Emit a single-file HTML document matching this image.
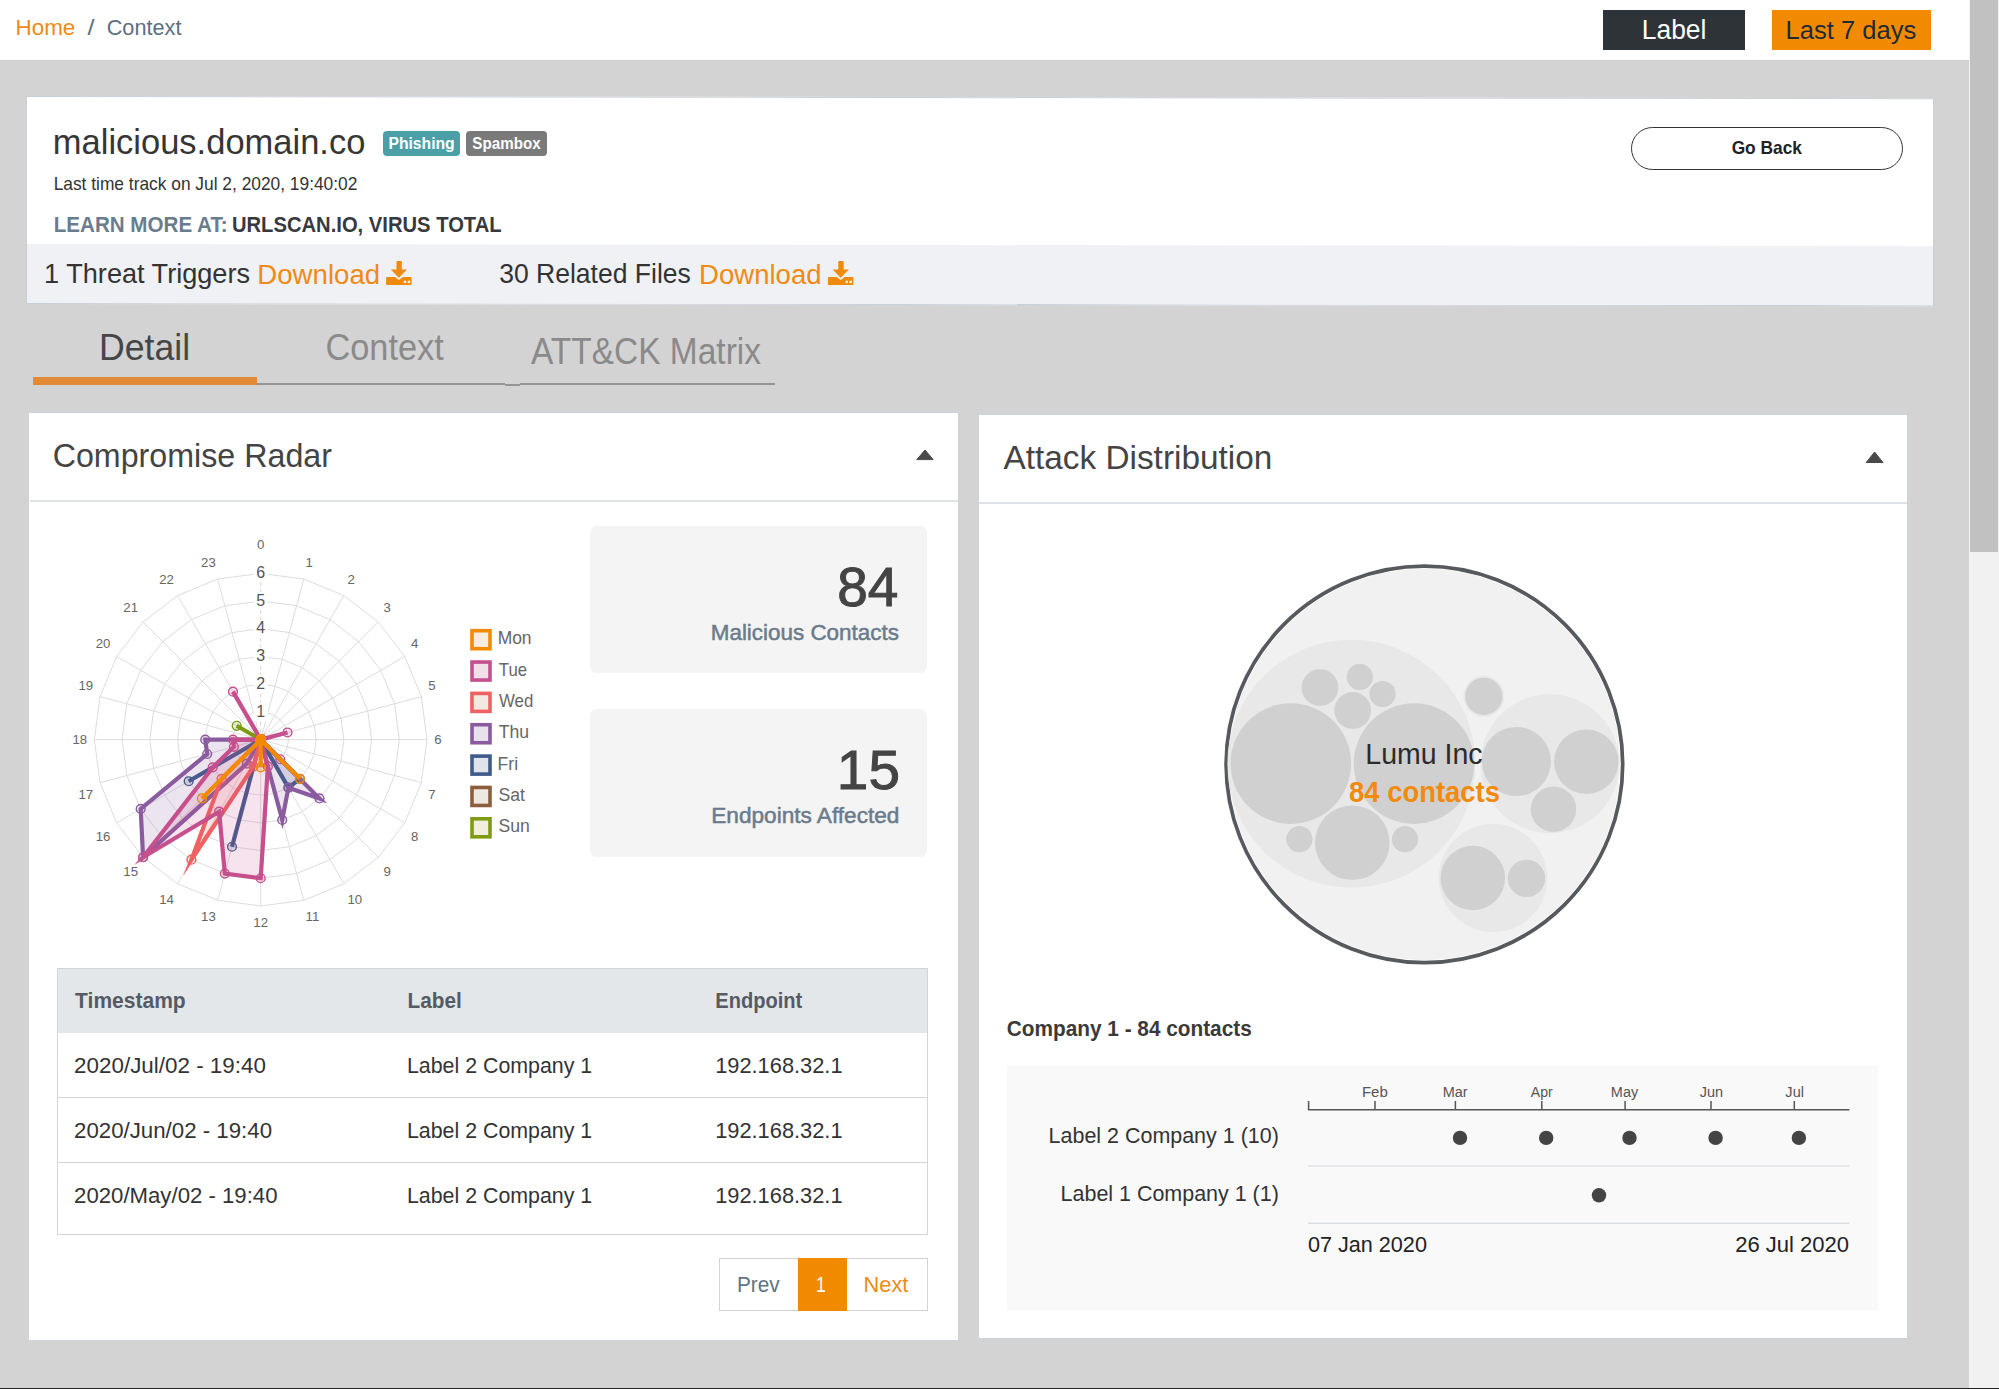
<!DOCTYPE html>
<html><head><meta charset="utf-8"><title>Context</title>
<style>
html,body{margin:0;padding:0}
body{width:1999px;height:1389px;overflow:hidden;background:#d3d3d3;position:relative;font-family:"Liberation Sans",sans-serif}
.a{position:absolute;box-sizing:border-box}
svg text{font-family:"Liberation Sans",sans-serif}
</style></head><body>
<div class="a" style="left:0;top:0;width:1969px;height:60px;background:#fff"></div>
<div class="a" style="left:0;top:60px;width:1969px;height:1px;background:#cbcdd0"></div>
<div class="a" style="left:1969px;top:0;width:30px;height:1389px;background:#f1f1f1"></div>
<div class="a" style="left:1970px;top:0;width:28px;height:552px;background:#c1c1c1"></div>
<div class="a" style="left:1603px;top:10px;width:142px;height:40px;background:#2e3338"></div>
<div class="a" style="left:1772px;top:10px;width:159px;height:40px;background:#f28a00"></div>

<div class="a" style="left:25.5px;top:95.5px;width:1907.5px;height:207.5px;background:#fff;border:1px solid #c9cfd7;transform:skewY(0.065deg);transform-origin:0 0"><div class="a" style="left:0;top:147.2px;width:1905.5px;height:59.3px;background:#eff1f4"></div></div>
<div class="a" style="left:383px;top:131px;width:77px;height:25px;background:#4aa0a6;border-radius:4px"></div>
<div class="a" style="left:465.6px;top:131px;width:81.6px;height:25px;background:#7a7a7a;border-radius:4px"></div>
<div class="a" style="left:1631px;top:127px;width:272px;height:42.5px;border:1.5px solid #333;border-radius:22px;background:#fff"></div>

<div class="a" style="left:33px;top:377px;width:224px;height:7.5px;background:#e08a35"></div>
<div class="a" style="left:257px;top:383px;width:518px;height:2px;background:#959595"></div>
<div class="a" style="left:505px;top:383px;width:15px;height:1px;background:#d3d3d3"></div>
<div class="a" style="left:505px;top:384px;width:15px;height:2px;background:#959595"></div>

<div class="a" style="left:28px;top:412px;width:930.5px;height:928.8px;background:#fff;border:1px solid #cdd3da"></div>
<div class="a" style="left:29.5px;top:500px;width:928px;height:1.5px;background:#dfe2e6"></div>
<div class="a" style="left:977.5px;top:413.5px;width:930px;height:925.6px;background:#fff;border:1px solid #cdd3da"></div>
<div class="a" style="left:978.5px;top:502px;width:928px;height:1.5px;background:#dfe2e6"></div>

<div class="a" style="left:590px;top:526px;width:337px;height:147px;background:#f4f4f4;border-radius:7px"></div>
<div class="a" style="left:590px;top:708.5px;width:337px;height:148px;background:#f4f4f4;border-radius:7px"></div>

<div class="a" style="left:56.5px;top:968px;width:871px;height:267px;background:#fff;border:1px solid #d2d6db"></div>
<div class="a" style="left:57.5px;top:969px;width:869px;height:63.5px;background:#e4e7ea"></div>
<div class="a" style="left:57.5px;top:1097px;width:869px;height:1px;background:#d2d6db"></div>
<div class="a" style="left:57.5px;top:1162.3px;width:869px;height:1px;background:#d2d6db"></div>

<div class="a" style="left:719px;top:1258px;width:208.5px;height:53px;background:#fff;border:1px solid #cfd4da"></div>
<div class="a" style="left:797.7px;top:1258px;width:49.2px;height:53px;background:#f28a00"></div>

<div class="a" style="left:1006.8px;top:1066.3px;width:871.4px;height:244px;background:#f9f9f9"></div>
<div class="a" style="left:0;top:1388px;width:1999px;height:1px;background:#222"></div>

<svg class="a" style="left:0;top:0" width="1999" height="1389" viewBox="0 0 1999 1389">
<g id="radar">
<polygon points="260.70,711.93 267.87,712.87 274.56,715.64 280.30,720.05 284.71,725.79 287.48,732.48 288.42,739.65 287.48,746.82 284.71,753.51 280.30,759.25 274.56,763.66 267.87,766.43 260.70,767.37 253.53,766.43 246.84,763.66 241.10,759.25 236.69,753.51 233.92,746.82 232.98,739.65 233.92,732.48 236.69,725.79 241.10,720.05 246.84,715.64 253.53,712.87" fill="none" stroke="#dddddd" stroke-width="1"/>
<polygon points="260.70,684.21 275.05,686.10 288.42,691.64 299.90,700.45 308.71,711.93 314.25,725.30 316.14,739.65 314.25,754.00 308.71,767.37 299.90,778.85 288.42,787.66 275.05,793.20 260.70,795.09 246.35,793.20 232.98,787.66 221.50,778.85 212.69,767.37 207.15,754.00 205.26,739.65 207.15,725.30 212.69,711.93 221.50,700.45 232.98,691.64 246.35,686.10" fill="none" stroke="#dddddd" stroke-width="1"/>
<polygon points="260.70,656.49 282.22,659.32 302.28,667.63 319.50,680.85 332.72,698.07 341.03,718.13 343.86,739.65 341.03,761.17 332.72,781.23 319.50,798.45 302.28,811.67 282.22,819.98 260.70,822.81 239.18,819.98 219.12,811.67 201.90,798.45 188.68,781.23 180.37,761.17 177.54,739.65 180.37,718.13 188.68,698.07 201.90,680.85 219.12,667.63 239.18,659.32" fill="none" stroke="#dddddd" stroke-width="1"/>
<polygon points="260.70,628.77 289.40,632.55 316.14,643.63 339.10,661.25 356.72,684.21 367.80,710.95 371.58,739.65 367.80,768.35 356.72,795.09 339.10,818.05 316.14,835.67 289.40,846.75 260.70,850.53 232.00,846.75 205.26,835.67 182.30,818.05 164.68,795.09 153.60,768.35 149.82,739.65 153.60,710.95 164.68,684.21 182.30,661.25 205.26,643.63 232.00,632.55" fill="none" stroke="#dddddd" stroke-width="1"/>
<polygon points="260.70,601.05 296.57,605.77 330.00,619.62 358.70,641.65 380.73,670.35 394.58,703.78 399.30,739.65 394.58,775.52 380.73,808.95 358.70,837.65 330.00,859.68 296.57,873.53 260.70,878.25 224.83,873.53 191.40,859.68 162.70,837.65 140.67,808.95 126.82,775.52 122.10,739.65 126.82,703.78 140.67,670.35 162.70,641.65 191.40,619.62 224.83,605.77" fill="none" stroke="#dddddd" stroke-width="1"/>
<polygon points="260.70,573.33 303.75,579.00 343.86,595.61 378.31,622.04 404.74,656.49 421.35,696.60 427.02,739.65 421.35,782.70 404.74,822.81 378.31,857.26 343.86,883.69 303.75,900.30 260.70,905.97 217.65,900.30 177.54,883.69 143.09,857.26 116.66,822.81 100.05,782.70 94.38,739.65 100.05,696.60 116.66,656.49 143.09,622.04 177.54,595.61 217.65,579.00" fill="none" stroke="#dddddd" stroke-width="1"/>
<line x1="260.7" y1="739.65" x2="260.70" y2="573.33" stroke="#d6d6d6" stroke-width="1" stroke-dasharray="4 3"/>
<line x1="260.7" y1="739.65" x2="303.75" y2="579.00" stroke="#dddddd" stroke-width="1"/>
<line x1="260.7" y1="739.65" x2="343.86" y2="595.61" stroke="#dddddd" stroke-width="1"/>
<line x1="260.7" y1="739.65" x2="378.31" y2="622.04" stroke="#dddddd" stroke-width="1"/>
<line x1="260.7" y1="739.65" x2="404.74" y2="656.49" stroke="#dddddd" stroke-width="1"/>
<line x1="260.7" y1="739.65" x2="421.35" y2="696.60" stroke="#dddddd" stroke-width="1"/>
<line x1="260.7" y1="739.65" x2="427.02" y2="739.65" stroke="#dddddd" stroke-width="1"/>
<line x1="260.7" y1="739.65" x2="421.35" y2="782.70" stroke="#dddddd" stroke-width="1"/>
<line x1="260.7" y1="739.65" x2="404.74" y2="822.81" stroke="#dddddd" stroke-width="1"/>
<line x1="260.7" y1="739.65" x2="378.31" y2="857.26" stroke="#dddddd" stroke-width="1"/>
<line x1="260.7" y1="739.65" x2="343.86" y2="883.69" stroke="#dddddd" stroke-width="1"/>
<line x1="260.7" y1="739.65" x2="303.75" y2="900.30" stroke="#dddddd" stroke-width="1"/>
<line x1="260.7" y1="739.65" x2="260.70" y2="905.97" stroke="#dddddd" stroke-width="1"/>
<line x1="260.7" y1="739.65" x2="217.65" y2="900.30" stroke="#dddddd" stroke-width="1"/>
<line x1="260.7" y1="739.65" x2="177.54" y2="883.69" stroke="#dddddd" stroke-width="1"/>
<line x1="260.7" y1="739.65" x2="143.09" y2="857.26" stroke="#dddddd" stroke-width="1"/>
<line x1="260.7" y1="739.65" x2="116.66" y2="822.81" stroke="#dddddd" stroke-width="1"/>
<line x1="260.7" y1="739.65" x2="100.05" y2="782.70" stroke="#dddddd" stroke-width="1"/>
<line x1="260.7" y1="739.65" x2="94.38" y2="739.65" stroke="#dddddd" stroke-width="1"/>
<line x1="260.7" y1="739.65" x2="100.05" y2="696.60" stroke="#dddddd" stroke-width="1"/>
<line x1="260.7" y1="739.65" x2="116.66" y2="656.49" stroke="#dddddd" stroke-width="1"/>
<line x1="260.7" y1="739.65" x2="143.09" y2="622.04" stroke="#dddddd" stroke-width="1"/>
<line x1="260.7" y1="739.65" x2="177.54" y2="595.61" stroke="#dddddd" stroke-width="1"/>
<line x1="260.7" y1="739.65" x2="217.65" y2="579.00" stroke="#dddddd" stroke-width="1"/>
<rect x="253.7" y="702.93" width="14" height="18" fill="#fff"/>
<text x="260.7" y="716.53" font-size="16" fill="#555" text-anchor="middle">1</text>
<rect x="253.7" y="675.21" width="14" height="18" fill="#fff"/>
<text x="260.7" y="688.81" font-size="16" fill="#555" text-anchor="middle">2</text>
<rect x="253.7" y="647.49" width="14" height="18" fill="#fff"/>
<text x="260.7" y="661.09" font-size="16" fill="#555" text-anchor="middle">3</text>
<rect x="253.7" y="619.77" width="14" height="18" fill="#fff"/>
<text x="260.7" y="633.37" font-size="16" fill="#555" text-anchor="middle">4</text>
<rect x="253.7" y="592.05" width="14" height="18" fill="#fff"/>
<text x="260.7" y="605.65" font-size="16" fill="#555" text-anchor="middle">5</text>
<rect x="253.7" y="564.3299999999999" width="14" height="18" fill="#fff"/>
<text x="260.7" y="577.93" font-size="16" fill="#555" text-anchor="middle">6</text>
<text x="260.70" y="549.45" font-size="13.2" fill="#666" text-anchor="middle">0</text>
<text x="305.61" y="567.16" font-size="13.2" fill="#666" text-anchor="start">1</text>
<text x="347.45" y="584.49" font-size="13.2" fill="#666" text-anchor="start">2</text>
<text x="383.38" y="612.07" font-size="13.2" fill="#666" text-anchor="start">3</text>
<text x="410.96" y="648.00" font-size="13.2" fill="#666" text-anchor="start">4</text>
<text x="428.29" y="689.84" font-size="13.2" fill="#666" text-anchor="start">5</text>
<text x="434.20" y="744.25" font-size="13.2" fill="#666" text-anchor="start">6</text>
<text x="428.29" y="798.66" font-size="13.2" fill="#666" text-anchor="start">7</text>
<text x="410.96" y="840.50" font-size="13.2" fill="#666" text-anchor="start">8</text>
<text x="383.38" y="876.43" font-size="13.2" fill="#666" text-anchor="start">9</text>
<text x="347.45" y="904.01" font-size="13.2" fill="#666" text-anchor="start">10</text>
<text x="305.61" y="921.34" font-size="13.2" fill="#666" text-anchor="start">11</text>
<text x="260.70" y="927.25" font-size="13.2" fill="#666" text-anchor="middle">12</text>
<text x="215.79" y="921.34" font-size="13.2" fill="#666" text-anchor="end">13</text>
<text x="173.95" y="904.01" font-size="13.2" fill="#666" text-anchor="end">14</text>
<text x="138.02" y="876.43" font-size="13.2" fill="#666" text-anchor="end">15</text>
<text x="110.44" y="840.50" font-size="13.2" fill="#666" text-anchor="end">16</text>
<text x="93.11" y="798.66" font-size="13.2" fill="#666" text-anchor="end">17</text>
<text x="87.20" y="744.25" font-size="13.2" fill="#666" text-anchor="end">18</text>
<text x="93.11" y="689.84" font-size="13.2" fill="#666" text-anchor="end">19</text>
<text x="110.44" y="648.00" font-size="13.2" fill="#666" text-anchor="end">20</text>
<text x="138.02" y="612.07" font-size="13.2" fill="#666" text-anchor="end">21</text>
<text x="173.95" y="584.49" font-size="13.2" fill="#666" text-anchor="end">22</text>
<text x="215.79" y="567.16" font-size="13.2" fill="#666" text-anchor="end">23</text>
<polygon points="260.70,739.65 260.70,739.65 260.70,739.65 260.70,739.65 260.70,739.65 260.70,739.65 260.70,739.65 260.70,739.65 260.70,739.65 260.70,739.65 260.70,739.65 260.70,739.65 260.70,739.65 260.70,739.65 260.70,739.65 260.70,739.65 260.70,739.65 260.70,739.65 260.70,739.65 260.70,739.65 236.69,725.79 260.70,739.65 260.70,739.65 260.70,739.65" fill="rgba(126,155,18,0.16)" stroke="#7e9b12" stroke-width="4.2" stroke-linejoin="miter" stroke-miterlimit="10"/>
<circle cx="260.70" cy="739.65" r="4.4" fill="rgba(126,155,18,0.15)" stroke="#7e9b12" stroke-width="1.4"/>
<circle cx="260.70" cy="739.65" r="4.4" fill="rgba(126,155,18,0.15)" stroke="#7e9b12" stroke-width="1.4"/>
<circle cx="260.70" cy="739.65" r="4.4" fill="rgba(126,155,18,0.15)" stroke="#7e9b12" stroke-width="1.4"/>
<circle cx="260.70" cy="739.65" r="4.4" fill="rgba(126,155,18,0.15)" stroke="#7e9b12" stroke-width="1.4"/>
<circle cx="260.70" cy="739.65" r="4.4" fill="rgba(126,155,18,0.15)" stroke="#7e9b12" stroke-width="1.4"/>
<circle cx="260.70" cy="739.65" r="4.4" fill="rgba(126,155,18,0.15)" stroke="#7e9b12" stroke-width="1.4"/>
<circle cx="260.70" cy="739.65" r="4.4" fill="rgba(126,155,18,0.15)" stroke="#7e9b12" stroke-width="1.4"/>
<circle cx="260.70" cy="739.65" r="4.4" fill="rgba(126,155,18,0.15)" stroke="#7e9b12" stroke-width="1.4"/>
<circle cx="260.70" cy="739.65" r="4.4" fill="rgba(126,155,18,0.15)" stroke="#7e9b12" stroke-width="1.4"/>
<circle cx="260.70" cy="739.65" r="4.4" fill="rgba(126,155,18,0.15)" stroke="#7e9b12" stroke-width="1.4"/>
<circle cx="260.70" cy="739.65" r="4.4" fill="rgba(126,155,18,0.15)" stroke="#7e9b12" stroke-width="1.4"/>
<circle cx="260.70" cy="739.65" r="4.4" fill="rgba(126,155,18,0.15)" stroke="#7e9b12" stroke-width="1.4"/>
<circle cx="260.70" cy="739.65" r="4.4" fill="rgba(126,155,18,0.15)" stroke="#7e9b12" stroke-width="1.4"/>
<circle cx="260.70" cy="739.65" r="4.4" fill="rgba(126,155,18,0.15)" stroke="#7e9b12" stroke-width="1.4"/>
<circle cx="260.70" cy="739.65" r="4.4" fill="rgba(126,155,18,0.15)" stroke="#7e9b12" stroke-width="1.4"/>
<circle cx="260.70" cy="739.65" r="4.4" fill="rgba(126,155,18,0.15)" stroke="#7e9b12" stroke-width="1.4"/>
<circle cx="260.70" cy="739.65" r="4.4" fill="rgba(126,155,18,0.15)" stroke="#7e9b12" stroke-width="1.4"/>
<circle cx="260.70" cy="739.65" r="4.4" fill="rgba(126,155,18,0.15)" stroke="#7e9b12" stroke-width="1.4"/>
<circle cx="260.70" cy="739.65" r="4.4" fill="rgba(126,155,18,0.15)" stroke="#7e9b12" stroke-width="1.4"/>
<circle cx="260.70" cy="739.65" r="4.4" fill="rgba(126,155,18,0.15)" stroke="#7e9b12" stroke-width="1.4"/>
<circle cx="236.69" cy="725.79" r="4.4" fill="rgba(126,155,18,0.15)" stroke="#7e9b12" stroke-width="1.4"/>
<circle cx="260.70" cy="739.65" r="4.4" fill="rgba(126,155,18,0.15)" stroke="#7e9b12" stroke-width="1.4"/>
<circle cx="260.70" cy="739.65" r="4.4" fill="rgba(126,155,18,0.15)" stroke="#7e9b12" stroke-width="1.4"/>
<circle cx="260.70" cy="739.65" r="4.4" fill="rgba(126,155,18,0.15)" stroke="#7e9b12" stroke-width="1.4"/>
<polygon points="260.70,739.65 260.70,739.65 260.70,739.65 260.70,739.65 260.70,739.65 260.70,739.65 260.70,739.65 260.70,739.65 260.70,739.65 260.70,739.65 260.70,739.65 260.70,739.65 260.70,739.65 260.70,739.65 260.70,739.65 260.70,739.65 260.70,739.65 260.70,739.65 260.70,739.65 260.70,739.65 260.70,739.65 260.70,739.65 260.70,739.65 260.70,739.65" fill="rgba(140,94,60,0.16)" stroke="#8c5e3c" stroke-width="4.2" stroke-linejoin="miter" stroke-miterlimit="10"/>
<circle cx="260.70" cy="739.65" r="4.4" fill="rgba(140,94,60,0.15)" stroke="#8c5e3c" stroke-width="1.4"/>
<circle cx="260.70" cy="739.65" r="4.4" fill="rgba(140,94,60,0.15)" stroke="#8c5e3c" stroke-width="1.4"/>
<circle cx="260.70" cy="739.65" r="4.4" fill="rgba(140,94,60,0.15)" stroke="#8c5e3c" stroke-width="1.4"/>
<circle cx="260.70" cy="739.65" r="4.4" fill="rgba(140,94,60,0.15)" stroke="#8c5e3c" stroke-width="1.4"/>
<circle cx="260.70" cy="739.65" r="4.4" fill="rgba(140,94,60,0.15)" stroke="#8c5e3c" stroke-width="1.4"/>
<circle cx="260.70" cy="739.65" r="4.4" fill="rgba(140,94,60,0.15)" stroke="#8c5e3c" stroke-width="1.4"/>
<circle cx="260.70" cy="739.65" r="4.4" fill="rgba(140,94,60,0.15)" stroke="#8c5e3c" stroke-width="1.4"/>
<circle cx="260.70" cy="739.65" r="4.4" fill="rgba(140,94,60,0.15)" stroke="#8c5e3c" stroke-width="1.4"/>
<circle cx="260.70" cy="739.65" r="4.4" fill="rgba(140,94,60,0.15)" stroke="#8c5e3c" stroke-width="1.4"/>
<circle cx="260.70" cy="739.65" r="4.4" fill="rgba(140,94,60,0.15)" stroke="#8c5e3c" stroke-width="1.4"/>
<circle cx="260.70" cy="739.65" r="4.4" fill="rgba(140,94,60,0.15)" stroke="#8c5e3c" stroke-width="1.4"/>
<circle cx="260.70" cy="739.65" r="4.4" fill="rgba(140,94,60,0.15)" stroke="#8c5e3c" stroke-width="1.4"/>
<circle cx="260.70" cy="739.65" r="4.4" fill="rgba(140,94,60,0.15)" stroke="#8c5e3c" stroke-width="1.4"/>
<circle cx="260.70" cy="739.65" r="4.4" fill="rgba(140,94,60,0.15)" stroke="#8c5e3c" stroke-width="1.4"/>
<circle cx="260.70" cy="739.65" r="4.4" fill="rgba(140,94,60,0.15)" stroke="#8c5e3c" stroke-width="1.4"/>
<circle cx="260.70" cy="739.65" r="4.4" fill="rgba(140,94,60,0.15)" stroke="#8c5e3c" stroke-width="1.4"/>
<circle cx="260.70" cy="739.65" r="4.4" fill="rgba(140,94,60,0.15)" stroke="#8c5e3c" stroke-width="1.4"/>
<circle cx="260.70" cy="739.65" r="4.4" fill="rgba(140,94,60,0.15)" stroke="#8c5e3c" stroke-width="1.4"/>
<circle cx="260.70" cy="739.65" r="4.4" fill="rgba(140,94,60,0.15)" stroke="#8c5e3c" stroke-width="1.4"/>
<circle cx="260.70" cy="739.65" r="4.4" fill="rgba(140,94,60,0.15)" stroke="#8c5e3c" stroke-width="1.4"/>
<circle cx="260.70" cy="739.65" r="4.4" fill="rgba(140,94,60,0.15)" stroke="#8c5e3c" stroke-width="1.4"/>
<circle cx="260.70" cy="739.65" r="4.4" fill="rgba(140,94,60,0.15)" stroke="#8c5e3c" stroke-width="1.4"/>
<circle cx="260.70" cy="739.65" r="4.4" fill="rgba(140,94,60,0.15)" stroke="#8c5e3c" stroke-width="1.4"/>
<circle cx="260.70" cy="739.65" r="4.4" fill="rgba(140,94,60,0.15)" stroke="#8c5e3c" stroke-width="1.4"/>
<polygon points="260.70,739.65 260.70,739.65 260.70,739.65 260.70,739.65 260.70,739.65 260.70,739.65 260.70,739.65 260.70,739.65 260.70,739.65 299.90,778.85 288.42,787.66 260.70,739.65 260.70,739.65 232.00,846.75 260.70,739.65 260.70,739.65 188.68,781.23 260.70,739.65 260.70,739.65 260.70,739.65 260.70,739.65 260.70,739.65 260.70,739.65 260.70,739.65" fill="rgba(63,90,139,0.16)" stroke="#3f5a8b" stroke-width="4.2" stroke-linejoin="miter" stroke-miterlimit="10"/>
<circle cx="260.70" cy="739.65" r="4.4" fill="rgba(63,90,139,0.15)" stroke="#3f5a8b" stroke-width="1.4"/>
<circle cx="260.70" cy="739.65" r="4.4" fill="rgba(63,90,139,0.15)" stroke="#3f5a8b" stroke-width="1.4"/>
<circle cx="260.70" cy="739.65" r="4.4" fill="rgba(63,90,139,0.15)" stroke="#3f5a8b" stroke-width="1.4"/>
<circle cx="260.70" cy="739.65" r="4.4" fill="rgba(63,90,139,0.15)" stroke="#3f5a8b" stroke-width="1.4"/>
<circle cx="260.70" cy="739.65" r="4.4" fill="rgba(63,90,139,0.15)" stroke="#3f5a8b" stroke-width="1.4"/>
<circle cx="260.70" cy="739.65" r="4.4" fill="rgba(63,90,139,0.15)" stroke="#3f5a8b" stroke-width="1.4"/>
<circle cx="260.70" cy="739.65" r="4.4" fill="rgba(63,90,139,0.15)" stroke="#3f5a8b" stroke-width="1.4"/>
<circle cx="260.70" cy="739.65" r="4.4" fill="rgba(63,90,139,0.15)" stroke="#3f5a8b" stroke-width="1.4"/>
<circle cx="260.70" cy="739.65" r="4.4" fill="rgba(63,90,139,0.15)" stroke="#3f5a8b" stroke-width="1.4"/>
<circle cx="299.90" cy="778.85" r="4.4" fill="rgba(63,90,139,0.15)" stroke="#3f5a8b" stroke-width="1.4"/>
<circle cx="288.42" cy="787.66" r="4.4" fill="rgba(63,90,139,0.15)" stroke="#3f5a8b" stroke-width="1.4"/>
<circle cx="260.70" cy="739.65" r="4.4" fill="rgba(63,90,139,0.15)" stroke="#3f5a8b" stroke-width="1.4"/>
<circle cx="260.70" cy="739.65" r="4.4" fill="rgba(63,90,139,0.15)" stroke="#3f5a8b" stroke-width="1.4"/>
<circle cx="232.00" cy="846.75" r="4.4" fill="rgba(63,90,139,0.15)" stroke="#3f5a8b" stroke-width="1.4"/>
<circle cx="260.70" cy="739.65" r="4.4" fill="rgba(63,90,139,0.15)" stroke="#3f5a8b" stroke-width="1.4"/>
<circle cx="260.70" cy="739.65" r="4.4" fill="rgba(63,90,139,0.15)" stroke="#3f5a8b" stroke-width="1.4"/>
<circle cx="188.68" cy="781.23" r="4.4" fill="rgba(63,90,139,0.15)" stroke="#3f5a8b" stroke-width="1.4"/>
<circle cx="260.70" cy="739.65" r="4.4" fill="rgba(63,90,139,0.15)" stroke="#3f5a8b" stroke-width="1.4"/>
<circle cx="260.70" cy="739.65" r="4.4" fill="rgba(63,90,139,0.15)" stroke="#3f5a8b" stroke-width="1.4"/>
<circle cx="260.70" cy="739.65" r="4.4" fill="rgba(63,90,139,0.15)" stroke="#3f5a8b" stroke-width="1.4"/>
<circle cx="260.70" cy="739.65" r="4.4" fill="rgba(63,90,139,0.15)" stroke="#3f5a8b" stroke-width="1.4"/>
<circle cx="260.70" cy="739.65" r="4.4" fill="rgba(63,90,139,0.15)" stroke="#3f5a8b" stroke-width="1.4"/>
<circle cx="260.70" cy="739.65" r="4.4" fill="rgba(63,90,139,0.15)" stroke="#3f5a8b" stroke-width="1.4"/>
<circle cx="260.70" cy="739.65" r="4.4" fill="rgba(63,90,139,0.15)" stroke="#3f5a8b" stroke-width="1.4"/>
<polygon points="260.70,739.65 260.70,739.65 260.70,739.65 260.70,739.65 260.70,739.65 260.70,739.65 260.70,739.65 260.70,739.65 260.70,739.65 319.50,798.45 288.42,787.66 282.22,819.98 260.70,739.65 260.70,739.65 246.84,763.66 143.09,857.26 140.67,808.95 207.15,754.00 205.26,739.65 260.70,739.65 260.70,739.65 260.70,739.65 260.70,739.65 260.70,739.65" fill="rgba(138,91,158,0.16)" stroke="#8a5b9e" stroke-width="4.2" stroke-linejoin="miter" stroke-miterlimit="10"/>
<circle cx="260.70" cy="739.65" r="4.4" fill="rgba(138,91,158,0.15)" stroke="#8a5b9e" stroke-width="1.4"/>
<circle cx="260.70" cy="739.65" r="4.4" fill="rgba(138,91,158,0.15)" stroke="#8a5b9e" stroke-width="1.4"/>
<circle cx="260.70" cy="739.65" r="4.4" fill="rgba(138,91,158,0.15)" stroke="#8a5b9e" stroke-width="1.4"/>
<circle cx="260.70" cy="739.65" r="4.4" fill="rgba(138,91,158,0.15)" stroke="#8a5b9e" stroke-width="1.4"/>
<circle cx="260.70" cy="739.65" r="4.4" fill="rgba(138,91,158,0.15)" stroke="#8a5b9e" stroke-width="1.4"/>
<circle cx="260.70" cy="739.65" r="4.4" fill="rgba(138,91,158,0.15)" stroke="#8a5b9e" stroke-width="1.4"/>
<circle cx="260.70" cy="739.65" r="4.4" fill="rgba(138,91,158,0.15)" stroke="#8a5b9e" stroke-width="1.4"/>
<circle cx="260.70" cy="739.65" r="4.4" fill="rgba(138,91,158,0.15)" stroke="#8a5b9e" stroke-width="1.4"/>
<circle cx="260.70" cy="739.65" r="4.4" fill="rgba(138,91,158,0.15)" stroke="#8a5b9e" stroke-width="1.4"/>
<circle cx="319.50" cy="798.45" r="4.4" fill="rgba(138,91,158,0.15)" stroke="#8a5b9e" stroke-width="1.4"/>
<circle cx="288.42" cy="787.66" r="4.4" fill="rgba(138,91,158,0.15)" stroke="#8a5b9e" stroke-width="1.4"/>
<circle cx="282.22" cy="819.98" r="4.4" fill="rgba(138,91,158,0.15)" stroke="#8a5b9e" stroke-width="1.4"/>
<circle cx="260.70" cy="739.65" r="4.4" fill="rgba(138,91,158,0.15)" stroke="#8a5b9e" stroke-width="1.4"/>
<circle cx="260.70" cy="739.65" r="4.4" fill="rgba(138,91,158,0.15)" stroke="#8a5b9e" stroke-width="1.4"/>
<circle cx="246.84" cy="763.66" r="4.4" fill="rgba(138,91,158,0.15)" stroke="#8a5b9e" stroke-width="1.4"/>
<circle cx="143.09" cy="857.26" r="4.4" fill="rgba(138,91,158,0.15)" stroke="#8a5b9e" stroke-width="1.4"/>
<circle cx="140.67" cy="808.95" r="4.4" fill="rgba(138,91,158,0.15)" stroke="#8a5b9e" stroke-width="1.4"/>
<circle cx="207.15" cy="754.00" r="4.4" fill="rgba(138,91,158,0.15)" stroke="#8a5b9e" stroke-width="1.4"/>
<circle cx="205.26" cy="739.65" r="4.4" fill="rgba(138,91,158,0.15)" stroke="#8a5b9e" stroke-width="1.4"/>
<circle cx="260.70" cy="739.65" r="4.4" fill="rgba(138,91,158,0.15)" stroke="#8a5b9e" stroke-width="1.4"/>
<circle cx="260.70" cy="739.65" r="4.4" fill="rgba(138,91,158,0.15)" stroke="#8a5b9e" stroke-width="1.4"/>
<circle cx="260.70" cy="739.65" r="4.4" fill="rgba(138,91,158,0.15)" stroke="#8a5b9e" stroke-width="1.4"/>
<circle cx="260.70" cy="739.65" r="4.4" fill="rgba(138,91,158,0.15)" stroke="#8a5b9e" stroke-width="1.4"/>
<circle cx="260.70" cy="739.65" r="4.4" fill="rgba(138,91,158,0.15)" stroke="#8a5b9e" stroke-width="1.4"/>
<polygon points="260.70,739.65 260.70,739.65 260.70,739.65 260.70,739.65 260.70,739.65 260.70,739.65 260.70,739.65 260.70,739.65 260.70,739.65 260.70,739.65 260.70,739.65 260.70,739.65 260.70,739.65 253.53,766.43 191.40,859.68 221.50,778.85 260.70,739.65 260.70,739.65 260.70,739.65 260.70,739.65 260.70,739.65 260.70,739.65 260.70,739.65 260.70,739.65" fill="rgba(240,98,98,0.16)" stroke="#f06262" stroke-width="4.2" stroke-linejoin="miter" stroke-miterlimit="10"/>
<circle cx="260.70" cy="739.65" r="4.4" fill="rgba(240,98,98,0.15)" stroke="#f06262" stroke-width="1.4"/>
<circle cx="260.70" cy="739.65" r="4.4" fill="rgba(240,98,98,0.15)" stroke="#f06262" stroke-width="1.4"/>
<circle cx="260.70" cy="739.65" r="4.4" fill="rgba(240,98,98,0.15)" stroke="#f06262" stroke-width="1.4"/>
<circle cx="260.70" cy="739.65" r="4.4" fill="rgba(240,98,98,0.15)" stroke="#f06262" stroke-width="1.4"/>
<circle cx="260.70" cy="739.65" r="4.4" fill="rgba(240,98,98,0.15)" stroke="#f06262" stroke-width="1.4"/>
<circle cx="260.70" cy="739.65" r="4.4" fill="rgba(240,98,98,0.15)" stroke="#f06262" stroke-width="1.4"/>
<circle cx="260.70" cy="739.65" r="4.4" fill="rgba(240,98,98,0.15)" stroke="#f06262" stroke-width="1.4"/>
<circle cx="260.70" cy="739.65" r="4.4" fill="rgba(240,98,98,0.15)" stroke="#f06262" stroke-width="1.4"/>
<circle cx="260.70" cy="739.65" r="4.4" fill="rgba(240,98,98,0.15)" stroke="#f06262" stroke-width="1.4"/>
<circle cx="260.70" cy="739.65" r="4.4" fill="rgba(240,98,98,0.15)" stroke="#f06262" stroke-width="1.4"/>
<circle cx="260.70" cy="739.65" r="4.4" fill="rgba(240,98,98,0.15)" stroke="#f06262" stroke-width="1.4"/>
<circle cx="260.70" cy="739.65" r="4.4" fill="rgba(240,98,98,0.15)" stroke="#f06262" stroke-width="1.4"/>
<circle cx="260.70" cy="739.65" r="4.4" fill="rgba(240,98,98,0.15)" stroke="#f06262" stroke-width="1.4"/>
<circle cx="253.53" cy="766.43" r="4.4" fill="rgba(240,98,98,0.15)" stroke="#f06262" stroke-width="1.4"/>
<circle cx="191.40" cy="859.68" r="4.4" fill="rgba(240,98,98,0.15)" stroke="#f06262" stroke-width="1.4"/>
<circle cx="221.50" cy="778.85" r="4.4" fill="rgba(240,98,98,0.15)" stroke="#f06262" stroke-width="1.4"/>
<circle cx="260.70" cy="739.65" r="4.4" fill="rgba(240,98,98,0.15)" stroke="#f06262" stroke-width="1.4"/>
<circle cx="260.70" cy="739.65" r="4.4" fill="rgba(240,98,98,0.15)" stroke="#f06262" stroke-width="1.4"/>
<circle cx="260.70" cy="739.65" r="4.4" fill="rgba(240,98,98,0.15)" stroke="#f06262" stroke-width="1.4"/>
<circle cx="260.70" cy="739.65" r="4.4" fill="rgba(240,98,98,0.15)" stroke="#f06262" stroke-width="1.4"/>
<circle cx="260.70" cy="739.65" r="4.4" fill="rgba(240,98,98,0.15)" stroke="#f06262" stroke-width="1.4"/>
<circle cx="260.70" cy="739.65" r="4.4" fill="rgba(240,98,98,0.15)" stroke="#f06262" stroke-width="1.4"/>
<circle cx="260.70" cy="739.65" r="4.4" fill="rgba(240,98,98,0.15)" stroke="#f06262" stroke-width="1.4"/>
<circle cx="260.70" cy="739.65" r="4.4" fill="rgba(240,98,98,0.15)" stroke="#f06262" stroke-width="1.4"/>
<polygon points="260.70,739.65 260.70,739.65 260.70,739.65 260.70,739.65 260.70,739.65 287.48,732.48 260.70,739.65 260.70,739.65 260.70,739.65 280.30,759.25 260.70,739.65 267.87,766.43 260.70,878.25 224.83,873.53 219.12,811.67 143.09,857.26 212.69,767.37 233.92,746.82 232.98,739.65 260.70,739.65 260.70,739.65 260.70,739.65 232.98,691.64 260.70,739.65" fill="rgba(197,80,141,0.16)" stroke="#c5508d" stroke-width="4.2" stroke-linejoin="miter" stroke-miterlimit="10"/>
<circle cx="260.70" cy="739.65" r="4.4" fill="rgba(197,80,141,0.15)" stroke="#c5508d" stroke-width="1.4"/>
<circle cx="260.70" cy="739.65" r="4.4" fill="rgba(197,80,141,0.15)" stroke="#c5508d" stroke-width="1.4"/>
<circle cx="260.70" cy="739.65" r="4.4" fill="rgba(197,80,141,0.15)" stroke="#c5508d" stroke-width="1.4"/>
<circle cx="260.70" cy="739.65" r="4.4" fill="rgba(197,80,141,0.15)" stroke="#c5508d" stroke-width="1.4"/>
<circle cx="260.70" cy="739.65" r="4.4" fill="rgba(197,80,141,0.15)" stroke="#c5508d" stroke-width="1.4"/>
<circle cx="287.48" cy="732.48" r="4.4" fill="rgba(197,80,141,0.15)" stroke="#c5508d" stroke-width="1.4"/>
<circle cx="260.70" cy="739.65" r="4.4" fill="rgba(197,80,141,0.15)" stroke="#c5508d" stroke-width="1.4"/>
<circle cx="260.70" cy="739.65" r="4.4" fill="rgba(197,80,141,0.15)" stroke="#c5508d" stroke-width="1.4"/>
<circle cx="260.70" cy="739.65" r="4.4" fill="rgba(197,80,141,0.15)" stroke="#c5508d" stroke-width="1.4"/>
<circle cx="280.30" cy="759.25" r="4.4" fill="rgba(197,80,141,0.15)" stroke="#c5508d" stroke-width="1.4"/>
<circle cx="260.70" cy="739.65" r="4.4" fill="rgba(197,80,141,0.15)" stroke="#c5508d" stroke-width="1.4"/>
<circle cx="267.87" cy="766.43" r="4.4" fill="rgba(197,80,141,0.15)" stroke="#c5508d" stroke-width="1.4"/>
<circle cx="260.70" cy="878.25" r="4.4" fill="rgba(197,80,141,0.15)" stroke="#c5508d" stroke-width="1.4"/>
<circle cx="224.83" cy="873.53" r="4.4" fill="rgba(197,80,141,0.15)" stroke="#c5508d" stroke-width="1.4"/>
<circle cx="219.12" cy="811.67" r="4.4" fill="rgba(197,80,141,0.15)" stroke="#c5508d" stroke-width="1.4"/>
<circle cx="143.09" cy="857.26" r="4.4" fill="rgba(197,80,141,0.15)" stroke="#c5508d" stroke-width="1.4"/>
<circle cx="212.69" cy="767.37" r="4.4" fill="rgba(197,80,141,0.15)" stroke="#c5508d" stroke-width="1.4"/>
<circle cx="233.92" cy="746.82" r="4.4" fill="rgba(197,80,141,0.15)" stroke="#c5508d" stroke-width="1.4"/>
<circle cx="232.98" cy="739.65" r="4.4" fill="rgba(197,80,141,0.15)" stroke="#c5508d" stroke-width="1.4"/>
<circle cx="260.70" cy="739.65" r="4.4" fill="rgba(197,80,141,0.15)" stroke="#c5508d" stroke-width="1.4"/>
<circle cx="260.70" cy="739.65" r="4.4" fill="rgba(197,80,141,0.15)" stroke="#c5508d" stroke-width="1.4"/>
<circle cx="260.70" cy="739.65" r="4.4" fill="rgba(197,80,141,0.15)" stroke="#c5508d" stroke-width="1.4"/>
<circle cx="232.98" cy="691.64" r="4.4" fill="rgba(197,80,141,0.15)" stroke="#c5508d" stroke-width="1.4"/>
<circle cx="260.70" cy="739.65" r="4.4" fill="rgba(197,80,141,0.15)" stroke="#c5508d" stroke-width="1.4"/>
<polygon points="260.70,739.65 260.70,739.65 260.70,739.65 260.70,739.65 260.70,739.65 260.70,739.65 260.70,739.65 260.70,739.65 260.70,739.65 299.90,778.85 260.70,739.65 260.70,739.65 260.70,767.37 260.70,739.65 260.70,739.65 201.90,798.45 260.70,739.65 260.70,739.65 260.70,739.65 260.70,739.65 260.70,739.65 260.70,739.65 260.70,739.65 260.70,739.65" fill="rgba(242,139,0,0.16)" stroke="#f28b00" stroke-width="4.2" stroke-linejoin="miter" stroke-miterlimit="10"/>
<circle cx="260.70" cy="739.65" r="4.4" fill="rgba(242,139,0,0.15)" stroke="#f28b00" stroke-width="1.4"/>
<circle cx="260.70" cy="739.65" r="4.4" fill="rgba(242,139,0,0.15)" stroke="#f28b00" stroke-width="1.4"/>
<circle cx="260.70" cy="739.65" r="4.4" fill="rgba(242,139,0,0.15)" stroke="#f28b00" stroke-width="1.4"/>
<circle cx="260.70" cy="739.65" r="4.4" fill="rgba(242,139,0,0.15)" stroke="#f28b00" stroke-width="1.4"/>
<circle cx="260.70" cy="739.65" r="4.4" fill="rgba(242,139,0,0.15)" stroke="#f28b00" stroke-width="1.4"/>
<circle cx="260.70" cy="739.65" r="4.4" fill="rgba(242,139,0,0.15)" stroke="#f28b00" stroke-width="1.4"/>
<circle cx="260.70" cy="739.65" r="4.4" fill="rgba(242,139,0,0.15)" stroke="#f28b00" stroke-width="1.4"/>
<circle cx="260.70" cy="739.65" r="4.4" fill="rgba(242,139,0,0.15)" stroke="#f28b00" stroke-width="1.4"/>
<circle cx="260.70" cy="739.65" r="4.4" fill="rgba(242,139,0,0.15)" stroke="#f28b00" stroke-width="1.4"/>
<circle cx="299.90" cy="778.85" r="4.4" fill="rgba(242,139,0,0.15)" stroke="#f28b00" stroke-width="1.4"/>
<circle cx="260.70" cy="739.65" r="4.4" fill="rgba(242,139,0,0.15)" stroke="#f28b00" stroke-width="1.4"/>
<circle cx="260.70" cy="739.65" r="4.4" fill="rgba(242,139,0,0.15)" stroke="#f28b00" stroke-width="1.4"/>
<circle cx="260.70" cy="767.37" r="4.4" fill="rgba(242,139,0,0.15)" stroke="#f28b00" stroke-width="1.4"/>
<circle cx="260.70" cy="739.65" r="4.4" fill="rgba(242,139,0,0.15)" stroke="#f28b00" stroke-width="1.4"/>
<circle cx="260.70" cy="739.65" r="4.4" fill="rgba(242,139,0,0.15)" stroke="#f28b00" stroke-width="1.4"/>
<circle cx="201.90" cy="798.45" r="4.4" fill="rgba(242,139,0,0.15)" stroke="#f28b00" stroke-width="1.4"/>
<circle cx="260.70" cy="739.65" r="4.4" fill="rgba(242,139,0,0.15)" stroke="#f28b00" stroke-width="1.4"/>
<circle cx="260.70" cy="739.65" r="4.4" fill="rgba(242,139,0,0.15)" stroke="#f28b00" stroke-width="1.4"/>
<circle cx="260.70" cy="739.65" r="4.4" fill="rgba(242,139,0,0.15)" stroke="#f28b00" stroke-width="1.4"/>
<circle cx="260.70" cy="739.65" r="4.4" fill="rgba(242,139,0,0.15)" stroke="#f28b00" stroke-width="1.4"/>
<circle cx="260.70" cy="739.65" r="4.4" fill="rgba(242,139,0,0.15)" stroke="#f28b00" stroke-width="1.4"/>
<circle cx="260.70" cy="739.65" r="4.4" fill="rgba(242,139,0,0.15)" stroke="#f28b00" stroke-width="1.4"/>
<circle cx="260.70" cy="739.65" r="4.4" fill="rgba(242,139,0,0.15)" stroke="#f28b00" stroke-width="1.4"/>
<circle cx="260.70" cy="739.65" r="4.4" fill="rgba(242,139,0,0.15)" stroke="#f28b00" stroke-width="1.4"/>
<rect x="472" y="630.70" width="18" height="18" fill="#f5eedf" stroke="#f28b00" stroke-width="3.6"/>
<rect x="472" y="662.05" width="18" height="18" fill="#efe0ea" stroke="#c5508d" stroke-width="3.6"/>
<rect x="472" y="693.40" width="18" height="18" fill="#f3e9e3" stroke="#f06262" stroke-width="3.6"/>
<rect x="472" y="724.75" width="18" height="18" fill="#e8e2ed" stroke="#8a5b9e" stroke-width="3.6"/>
<rect x="472" y="756.10" width="18" height="18" fill="#dfe3ea" stroke="#3f5a8b" stroke-width="3.6"/>
<rect x="472" y="787.45" width="18" height="18" fill="#eee8e3" stroke="#8c5e3c" stroke-width="3.6"/>
<rect x="472" y="818.80" width="18" height="18" fill="#f1eddf" stroke="#7e9b12" stroke-width="3.6"/>
</g>
<g id="bubbles">
<circle cx="1424.4" cy="764.4" r="198.3" fill="#fff" stroke="#56595d" stroke-width="3.7"/>
<circle cx="1424.4" cy="764.4" r="195.6" fill="#f1f1f1"/>
<circle cx="1351.4" cy="763.7" r="124" fill="#e8e8e8"/>
<circle cx="1549.9" cy="763.7" r="69.5" fill="#e8e8e8"/>
<circle cx="1493" cy="878" r="54.2" fill="#e8e8e8"/>
<circle cx="1483.8" cy="696.3" r="20.5" fill="#e8e8e8"/>
<circle cx="1290.8" cy="763.6" r="60.3" fill="#d0d0d0"/>
<circle cx="1414" cy="763.6" r="60.3" fill="#d0d0d0"/>
<circle cx="1352.3" cy="842.7" r="37.3" fill="#d0d0d0"/>
<circle cx="1299.4" cy="839.2" r="13.1" fill="#d0d0d0"/>
<circle cx="1405" cy="839.2" r="13.1" fill="#d0d0d0"/>
<circle cx="1320" cy="687.6" r="18.4" fill="#d0d0d0"/>
<circle cx="1359.8" cy="676.9" r="13.1" fill="#d0d0d0"/>
<circle cx="1382.6" cy="694" r="13.1" fill="#d0d0d0"/>
<circle cx="1352.7" cy="710.4" r="18.4" fill="#d0d0d0"/>
<circle cx="1483.8" cy="696.3" r="18.6" fill="#d0d0d0"/>
<circle cx="1516.4" cy="761.5" r="34.6" fill="#d0d0d0"/>
<circle cx="1586.3" cy="761.8" r="32.2" fill="#d0d0d0"/>
<circle cx="1553.5" cy="809.2" r="22.7" fill="#d0d0d0"/>
<circle cx="1472.8" cy="878" r="32.3" fill="#d0d0d0"/>
<circle cx="1526.5" cy="878.4" r="18.7" fill="#d0d0d0"/>
</g>
<g id="timeline">
<line x1="1308" y1="1109.75" x2="1849.4" y2="1109.75" stroke="#555" stroke-width="1.7"/>
<line x1="1308.6" y1="1101" x2="1308.6" y2="1110" stroke="#555" stroke-width="1.5"/>
<line x1="1375" y1="1101" x2="1375" y2="1110" stroke="#555" stroke-width="1.5"/>
<line x1="1455.4" y1="1101" x2="1455.4" y2="1110" stroke="#555" stroke-width="1.5"/>
<line x1="1541.8" y1="1101" x2="1541.8" y2="1110" stroke="#555" stroke-width="1.5"/>
<line x1="1625.1" y1="1101" x2="1625.1" y2="1110" stroke="#555" stroke-width="1.5"/>
<line x1="1711" y1="1101" x2="1711" y2="1110" stroke="#555" stroke-width="1.5"/>
<line x1="1794.3" y1="1101" x2="1794.3" y2="1110" stroke="#555" stroke-width="1.5"/>
<circle cx="1460" cy="1137.9" r="7.2" fill="#444"/>
<circle cx="1546.2" cy="1137.9" r="7.2" fill="#444"/>
<circle cx="1629.5" cy="1137.9" r="7.2" fill="#444"/>
<circle cx="1715.6" cy="1137.9" r="7.2" fill="#444"/>
<circle cx="1798.9" cy="1137.9" r="7.2" fill="#444"/>
<circle cx="1599" cy="1195.3" r="7.2" fill="#444"/>
<line x1="1308" y1="1166" x2="1849.4" y2="1166" stroke="#dcdfe3" stroke-width="1.5"/>
<line x1="1308" y1="1223.2" x2="1849.4" y2="1223.2" stroke="#dcdfe3" stroke-width="1.5"/>
</g>
<g id="icons">
<path d="M396.46000000000004,261.9 q0,-0.9 0.9,-0.9 h3.6 q0.9,0 0.9,0.9 V269.4 H407.0 L398.90000000000003,277.8 L390.8,269.4 H396.46000000000004 Z M386.1,277.9 q0,-1 1,-1 H395.0 L398.90000000000003,280.0 L403.05,276.9 H410.6 q1,0 1,1 V284.0 q0,1 -1,1 H387.1 q-1,0 -1,-1 Z" fill="#f08a0a"/><rect x="403.80" y="280.70" width="2.4" height="2.4" fill="#eff1f4"/><rect x="407.70" y="280.70" width="2.4" height="2.4" fill="#eff1f4"/>
<path d="M838.26,261.9 q0,-0.9 0.9,-0.9 h3.6 q0.9,0 0.9,0.9 V269.4 H848.8 L840.6999999999999,277.8 L832.6,269.4 H838.26 Z M827.9,277.9 q0,-1 1,-1 H836.8 L840.6999999999999,280.0 L844.85,276.9 H852.4 q1,0 1,1 V284.0 q0,1 -1,1 H828.9 q-1,0 -1,-1 Z" fill="#f08a0a"/><rect x="845.60" y="280.70" width="2.4" height="2.4" fill="#eff1f4"/><rect x="849.50" y="280.70" width="2.4" height="2.4" fill="#eff1f4"/>
<path d="M916.8,459.6 L925,450 L933.2,459.6 Z" fill="#4a4a4a" stroke="#4a4a4a" stroke-width="1" stroke-linejoin="round"/>
<path d="M1866.2,462.5 L1874.6,452 L1883,462.5 Z" fill="#4a4a4a" stroke="#4a4a4a" stroke-width="1" stroke-linejoin="round"/>
</g>
<g id="texts">
<text x="15.50" y="35.25" font-size="21.69" font-weight="normal" fill="#ef8a17" textLength="59.81" lengthAdjust="spacingAndGlyphs">Home</text>
<text x="87.50" y="35.25" font-size="21.69" font-weight="normal" fill="#5d6f80" textLength="7.01" lengthAdjust="spacingAndGlyphs">/</text>
<text x="106.73" y="35.25" font-size="21.69" font-weight="normal" fill="#5d6f80" textLength="74.69" lengthAdjust="spacingAndGlyphs">Context</text>
<text x="1641.84" y="38.80" font-size="26.88" font-weight="normal" fill="#ffffff" textLength="64.60" lengthAdjust="spacingAndGlyphs">Label</text>
<text x="1785.50" y="38.80" font-size="26.17" font-weight="normal" fill="#1f2a38" textLength="130.70" lengthAdjust="spacingAndGlyphs">Last 7 days</text>
<text x="52.84" y="153.90" font-size="34.74" font-weight="normal" fill="#363636" textLength="312.55" lengthAdjust="spacingAndGlyphs">malicious.domain.co</text>
<text x="388.42" y="149.20" font-size="17.21" font-weight="bold" fill="#ffffff" textLength="66.29" lengthAdjust="spacingAndGlyphs">Phishing</text>
<text x="472.36" y="149.20" font-size="17.21" font-weight="bold" fill="#ffffff" textLength="68.24" lengthAdjust="spacingAndGlyphs">Spambox</text>
<text x="53.64" y="190.00" font-size="18.78" font-weight="normal" fill="#333333" textLength="303.76" lengthAdjust="spacingAndGlyphs">Last time track on Jul 2, 2020, 19:40:02</text>
<text x="53.72" y="232.00" font-size="21.48" font-weight="bold" fill="#6b7c8d" textLength="173.88" lengthAdjust="spacingAndGlyphs">LEARN MORE AT:</text>
<text x="231.95" y="232.00" font-size="21.48" font-weight="bold" fill="#363a3e" textLength="269.69" lengthAdjust="spacingAndGlyphs">URLSCAN.IO, VIRUS TOTAL</text>
<text x="44.11" y="283.30" font-size="27.88" font-weight="normal" fill="#333333" textLength="205.93" lengthAdjust="spacingAndGlyphs">1 Threat Triggers</text>
<text x="257.34" y="283.90" font-size="26.74" font-weight="normal" fill="#ef8a17" textLength="122.81" lengthAdjust="spacingAndGlyphs">Download</text>
<text x="499.17" y="283.30" font-size="27.88" font-weight="normal" fill="#333333" textLength="191.66" lengthAdjust="spacingAndGlyphs">30 Related Files</text>
<text x="699.10" y="283.90" font-size="26.74" font-weight="normal" fill="#ef8a17" textLength="122.45" lengthAdjust="spacingAndGlyphs">Download</text>
<text x="1731.66" y="154.20" font-size="18.78" font-weight="bold" fill="#1e2226" textLength="70.23" lengthAdjust="spacingAndGlyphs">Go Back</text>
<text x="99.12" y="360.00" font-size="36.70" font-weight="normal" fill="#464646" textLength="91.03" lengthAdjust="spacingAndGlyphs">Detail</text>
<text x="325.39" y="360.00" font-size="36.70" font-weight="normal" fill="#8a8a8a" textLength="118.49" lengthAdjust="spacingAndGlyphs">Context</text>
<text x="531.00" y="363.50" font-size="36.27" font-weight="normal" fill="#8a8a8a" textLength="230.00" lengthAdjust="spacingAndGlyphs">ATT&amp;CK Matrix</text>
<text x="52.69" y="467.40" font-size="33.29" font-weight="normal" fill="#444444" textLength="279.27" lengthAdjust="spacingAndGlyphs">Compromise Radar</text>
<text x="1003.50" y="469.20" font-size="33.29" font-weight="normal" fill="#444444" textLength="268.77" lengthAdjust="spacingAndGlyphs">Attack Distribution</text>
<text x="837.28" y="605.90" font-size="54.91" font-weight="normal" fill="#444444" textLength="61.08" lengthAdjust="spacingAndGlyphs" stroke="#444444" stroke-width="1.0">84</text>
<text x="710.75" y="639.70" font-size="22.33" font-weight="normal" fill="#6a7b8c" textLength="188.15" lengthAdjust="spacingAndGlyphs" stroke="#6a7b8c" stroke-width="0.5">Malicious Contacts</text>
<text x="836.86" y="788.90" font-size="55.76" font-weight="normal" fill="#444444" textLength="63.04" lengthAdjust="spacingAndGlyphs" stroke="#444444" stroke-width="1.0">15</text>
<text x="711.24" y="823.00" font-size="22.05" font-weight="normal" fill="#6a7b8c" textLength="188.22" lengthAdjust="spacingAndGlyphs" stroke="#6a7b8c" stroke-width="0.5">Endpoints Affected</text>
<text x="497.64" y="644.30" font-size="17.64" font-weight="normal" fill="#666666" textLength="33.94" lengthAdjust="spacingAndGlyphs">Mon</text>
<text x="498.74" y="675.65" font-size="17.64" font-weight="normal" fill="#666666" textLength="28.34" lengthAdjust="spacingAndGlyphs">Tue</text>
<text x="499.00" y="707.00" font-size="17.64" font-weight="normal" fill="#666666" textLength="34.24" lengthAdjust="spacingAndGlyphs">Wed</text>
<text x="498.73" y="738.35" font-size="17.60" font-weight="normal" fill="#666666">Thu</text>
<text x="497.62" y="769.70" font-size="17.60" font-weight="normal" fill="#666666">Fri</text>
<text x="498.45" y="801.05" font-size="17.60" font-weight="normal" fill="#666666">Sat</text>
<text x="498.45" y="832.40" font-size="17.60" font-weight="normal" fill="#666666">Sun</text>
<text x="75.10" y="1008.40" font-size="22.33" font-weight="bold" fill="#545b64" textLength="110.59" lengthAdjust="spacingAndGlyphs">Timestamp</text>
<text x="407.50" y="1008.40" font-size="22.33" font-weight="bold" fill="#545b64" textLength="54.22" lengthAdjust="spacingAndGlyphs">Label</text>
<text x="715.24" y="1008.40" font-size="22.33" font-weight="bold" fill="#545b64" textLength="87.05" lengthAdjust="spacingAndGlyphs">Endpoint</text>
<text x="74.05" y="1072.60" font-size="22.19" font-weight="normal" fill="#333333" textLength="191.91" lengthAdjust="spacingAndGlyphs">2020/Jul/02 - 19:40</text>
<text x="406.93" y="1072.60" font-size="22.19" font-weight="normal" fill="#333333" textLength="185.34" lengthAdjust="spacingAndGlyphs">Label 2 Company 1</text>
<text x="715.14" y="1072.60" font-size="22.19" font-weight="normal" fill="#333333" textLength="127.45" lengthAdjust="spacingAndGlyphs">192.168.32.1</text>
<text x="74.06" y="1137.80" font-size="22.19" font-weight="normal" fill="#333333" textLength="198.00" lengthAdjust="spacingAndGlyphs">2020/Jun/02 - 19:40</text>
<text x="406.93" y="1137.80" font-size="22.19" font-weight="normal" fill="#333333" textLength="185.34" lengthAdjust="spacingAndGlyphs">Label 2 Company 1</text>
<text x="715.14" y="1137.80" font-size="22.19" font-weight="normal" fill="#333333" textLength="127.45" lengthAdjust="spacingAndGlyphs">192.168.32.1</text>
<text x="74.06" y="1203.10" font-size="22.19" font-weight="normal" fill="#333333" textLength="203.49" lengthAdjust="spacingAndGlyphs">2020/May/02 - 19:40</text>
<text x="406.93" y="1203.10" font-size="22.19" font-weight="normal" fill="#333333" textLength="185.34" lengthAdjust="spacingAndGlyphs">Label 2 Company 1</text>
<text x="715.14" y="1203.10" font-size="22.19" font-weight="normal" fill="#333333" textLength="127.45" lengthAdjust="spacingAndGlyphs">192.168.32.1</text>
<text x="736.88" y="1292.00" font-size="21.91" font-weight="normal" fill="#5f7384" textLength="42.72" lengthAdjust="spacingAndGlyphs">Prev</text>
<text x="815.90" y="1292.00" font-size="21.91" font-weight="normal" fill="#ffffff" textLength="9.82" lengthAdjust="spacingAndGlyphs">1</text>
<text x="863.60" y="1292.00" font-size="21.91" font-weight="normal" fill="#ef8a17" textLength="44.83" lengthAdjust="spacingAndGlyphs">Next</text>
<text x="1365.37" y="764.30" font-size="29.45" font-weight="normal" fill="#2a2a2a" textLength="117.17" lengthAdjust="spacingAndGlyphs">Lumu Inc</text>
<text x="1349.04" y="801.50" font-size="28.59" font-weight="bold" fill="#f28a0c" textLength="150.97" lengthAdjust="spacingAndGlyphs">84 contacts</text>
<text x="1006.85" y="1036.30" font-size="21.34" font-weight="bold" fill="#3a3a3a" textLength="244.89" lengthAdjust="spacingAndGlyphs">Company 1 - 84 contacts</text>
<text x="1048.62" y="1143.10" font-size="21.76" font-weight="normal" fill="#333333" textLength="230.19" lengthAdjust="spacingAndGlyphs">Label 2 Company 1 (10)</text>
<text x="1060.62" y="1200.60" font-size="22.48" font-weight="normal" fill="#333333" textLength="218.19" lengthAdjust="spacingAndGlyphs">Label 1 Company 1 (1)</text>
<text x="1361.93" y="1096.70" font-size="15.22" font-weight="normal" fill="#555555" textLength="25.88" lengthAdjust="spacingAndGlyphs">Feb</text>
<text x="1442.67" y="1096.70" font-size="15.22" font-weight="normal" fill="#555555" textLength="25.01" lengthAdjust="spacingAndGlyphs">Mar</text>
<text x="1530.80" y="1096.70" font-size="15.22" font-weight="normal" fill="#555555" textLength="21.87" lengthAdjust="spacingAndGlyphs">Apr</text>
<text x="1610.87" y="1096.70" font-size="15.22" font-weight="normal" fill="#555555" textLength="27.33" lengthAdjust="spacingAndGlyphs">May</text>
<text x="1699.77" y="1096.70" font-size="15.22" font-weight="normal" fill="#555555" textLength="23.34" lengthAdjust="spacingAndGlyphs">Jun</text>
<text x="1785.37" y="1096.70" font-size="15.22" font-weight="normal" fill="#555555" textLength="18.59" lengthAdjust="spacingAndGlyphs">Jul</text>
<text x="1307.92" y="1252.20" font-size="21.91" font-weight="normal" fill="#222222" textLength="119.01" lengthAdjust="spacingAndGlyphs">07 Jan 2020</text>
<text x="1735.17" y="1252.20" font-size="21.91" font-weight="normal" fill="#222222" textLength="113.88" lengthAdjust="spacingAndGlyphs">26 Jul 2020</text>
</g>
</svg>
</body></html>
